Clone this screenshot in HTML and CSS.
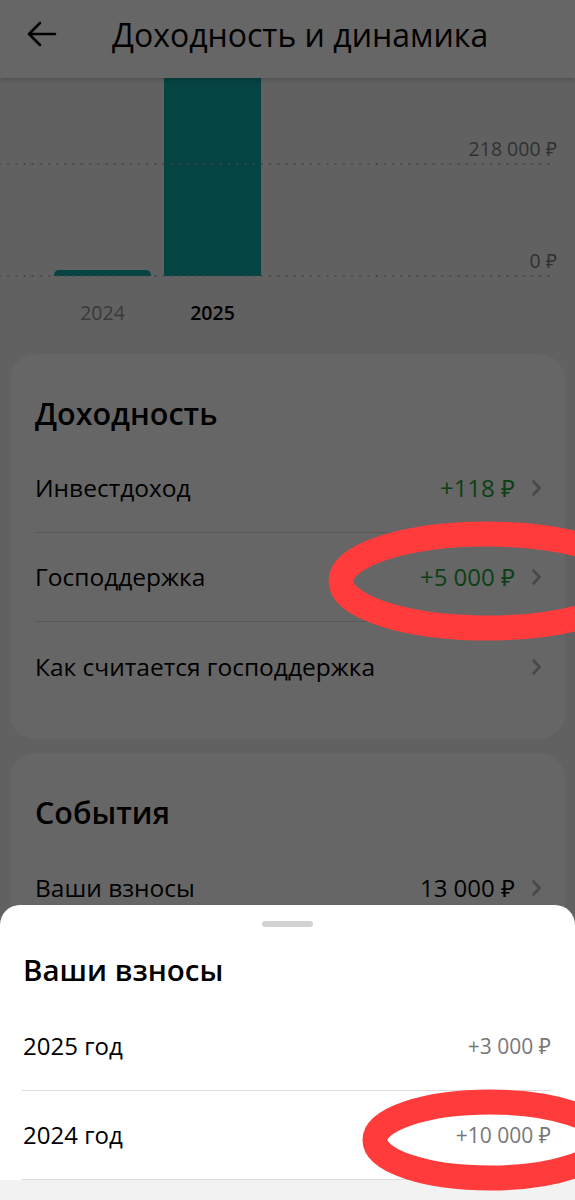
FILE: index.html
```html
<!DOCTYPE html>
<html lang="ru">
<head>
<meta charset="utf-8">
<title>Доходность и динамика</title>
<link rel="stylesheet" href="styles.css">
</head>
<body>
<div class="screen">
  <header class="topbar">
    <svg class="back" width="30" height="26" viewBox="0 0 30 26" aria-hidden="true">
      <path d="M28 13H3M13 2L2 13l11 11" fill="none" stroke="#000" stroke-width="2.6" stroke-linecap="round" stroke-linejoin="round"/>
    </svg>
    <h1 class="topbar-title">Доходность и динамика</h1>
  </header>

  <section class="chart">
    <div class="plot">
      <div class="bars">
        <div class="bar bar-small"></div>
        <div class="bar bar-big"></div>
      </div>
      <div class="gridline gridline-top"><span class="grid-label">218 000 ₽</span></div>
      <div class="gridline gridline-zero"><span class="grid-label">0 ₽</span></div>
    </div>
    <div class="years">
      <span class="year">2024</span>
      <span class="year year-active">2025</span>
    </div>
  </section>

  <section class="card">
    <h2 class="card-title">Доходность</h2>
    <div class="row">
      <span class="row-label">Инвестдоход</span>
      <span class="row-value value-green">+118 ₽</span>
      <svg class="chev" width="11" height="18" viewBox="0 0 11 18"><path d="M2.5 2.5l6 6.5-6 6.5" fill="none" stroke="#b4b4b4" stroke-width="2.6" stroke-linecap="round" stroke-linejoin="round"/></svg>
    </div>
    <div class="row">
      <span class="row-label">Господдержка</span>
      <span class="row-value value-green">+5 000 ₽</span>
      <svg class="chev" width="11" height="18" viewBox="0 0 11 18"><path d="M2.5 2.5l6 6.5-6 6.5" fill="none" stroke="#b4b4b4" stroke-width="2.6" stroke-linecap="round" stroke-linejoin="round"/></svg>
    </div>
    <div class="row">
      <span class="row-label">Как считается господдержка</span>
      <svg class="chev" width="11" height="18" viewBox="0 0 11 18"><path d="M2.5 2.5l6 6.5-6 6.5" fill="none" stroke="#b4b4b4" stroke-width="2.6" stroke-linecap="round" stroke-linejoin="round"/></svg>
    </div>
  </section>

  <section class="card">
    <h2 class="card-title">События</h2>
    <div class="row">
      <span class="row-label">Ваши взносы</span>
      <span class="row-value">13 000 ₽</span>
      <svg class="chev" width="11" height="18" viewBox="0 0 11 18"><path d="M2.5 2.5l6 6.5-6 6.5" fill="none" stroke="#b4b4b4" stroke-width="2.6" stroke-linecap="round" stroke-linejoin="round"/></svg>
    </div>
  </section>

  <div class="scrim"></div>

  <div class="sheet">
    <div class="handle"></div>
    <h2 class="sheet-title">Ваши взносы</h2>
    <div class="sheet-list">
      <div class="sheet-row">
        <span class="sheet-label">2025 год</span>
        <span class="sheet-value">+3 000 ₽</span>
      </div>
      <div class="sheet-row">
        <span class="sheet-label">2024 год</span>
        <span class="sheet-value">+10 000 ₽</span>
      </div>
    </div>
    <div class="sheet-footer"></div>
  </div>

  <svg class="marks" width="575" height="1200" viewBox="0 0 575 1200" aria-hidden="true">
    <ellipse cx="487" cy="581" rx="146" ry="47" fill="none" stroke="#ff3b3b" stroke-width="25"/>
    <ellipse cx="490" cy="1140" rx="115" ry="38" fill="none" stroke="#ff3b3b" stroke-width="25"/>
  </svg>
</div>
</body>
</html>
```

FILE: styles.css
```css
* { box-sizing: border-box; }

html, body {
  margin: 0;
  padding: 0;
}

body {
  width: 575px;
  height: 1200px;
  overflow: hidden;
  background: #f3f3f3;
  font-family: "Open Sans", "Noto Sans", "DejaVu Sans", sans-serif;
  color: #000;
}

.screen {
  position: relative;
  width: 575px;
  height: 1200px;
  overflow: hidden;
  display: flex;
  flex-direction: column;
}

/* top bar */
.topbar {
  position: relative;
  z-index: 2;
  height: 78px;
  flex: 0 0 78px;
  background: #fff;
  box-shadow: 0 2px 5px rgba(0, 0, 0, 0.18);
  display: flex;
  align-items: center;
  padding-left: 27px;
  gap: 55px;
}

.back {
  display: block;
  margin-top: -11px;
}

.topbar-title {
  margin: 0;
  margin-top: -10px;
  font-size: 32px;
  font-weight: 400;
  white-space: nowrap;
}

/* chart */
.chart {
  display: flex;
  flex-direction: column;
  height: 276px;
  flex: 0 0 276px;
}

.plot {
  position: relative;
  height: 198px;
  flex: 0 0 198px;
}

.bars {
  height: 100%;
  display: flex;
  align-items: flex-end;
  padding-left: 54px;
  gap: 13px;
}

.bar {
  width: 97px;
  background: #0fa8a8;
}

.bar-small {
  height: 6px;
  border-radius: 5px 5px 0 0;
}

.bar-big {
  height: 198px;
}

.gridline {
  position: absolute;
  left: 0;
  width: 555px;
  height: 2px;
  background-image: radial-gradient(circle, #a9a9a9 0.9px, transparent 1.1px);
  background-size: 8.2px 2px;
  background-position: 4px 0;
}

.gridline-top { top: 85px; }
.gridline-zero { top: 197px; }

.grid-label {
  position: absolute;
  right: -2px;
  bottom: 4px;
  font-size: 19.5px;
  line-height: 24px;
  color: #7c7c7c;
  white-space: nowrap;
}

.years {
  display: flex;
  padding-left: 54px;
  gap: 13px;
  padding-top: 25px;
}

.year {
  width: 97px;
  text-align: center;
  font-size: 19.5px;
  line-height: 24px;
  color: #919191;
}

.year-active {
  color: #000;
  font-weight: 600;
}

/* cards */
.card {
  margin: 0 10px 14px;
  background: #fff;
  border-radius: 26px;
  padding: 39px 0 28px 25px;
  flex: 0 0 auto;
}

.card-title {
  margin: 0 0 11px;
  font-size: 30.5px;
  line-height: 40px;
  font-weight: 600;
}

.row {
  height: 89px;
  display: flex;
  align-items: center;
  padding-right: 23px;
  border-bottom: 1px solid #dcdcdc;
}

.row:last-child { border-bottom: none; }

.row-label {
  flex: 1;
  font-size: 24.5px;
  line-height: 30px;
}

.row-value {
  font-size: 24px;
  line-height: 30px;
  margin-right: 16px;
  color: #000;
}

.value-green { color: #21a038; }

.chev { display: block; flex: 0 0 auto; }

/* scrim */
.scrim {
  position: absolute;
  inset: 0;
  z-index: 5;
  background: rgba(0, 0, 0, 0.6);
}

/* bottom sheet */
.sheet {
  position: absolute;
  z-index: 6;
  left: 0;
  right: 0;
  top: 905px;
  bottom: 0;
  background: #fff;
  border-radius: 20px 20px 0 0;
  display: flex;
  flex-direction: column;
  padding-top: 16px;
}

.handle {
  width: 51px;
  height: 6px;
  border-radius: 3px;
  background: #d2d2d2;
  align-self: center;
}

.sheet-title {
  margin: 25px 0 0 23px;
  font-size: 29.5px;
  line-height: 36px;
  font-weight: 600;
}

.sheet-list {
  margin: 14px 24px 0 22px;
}

.sheet-row {
  height: 89px;
  display: flex;
  align-items: center;
  justify-content: space-between;
  border-bottom: 1px solid #dcdcdc;
}

.sheet-label {
  font-size: 24px;
  line-height: 30px;
  padding-left: 1px;
}

.sheet-value {
  font-size: 21px;
  line-height: 26px;
  color: #787878;
}

.sheet-footer {
  flex: 1;
  background: #f2f2f2;
}

/* hand-drawn annotation marks */
.marks {
  position: absolute;
  left: 0;
  top: 0;
  z-index: 10;
  pointer-events: none;
}
```
